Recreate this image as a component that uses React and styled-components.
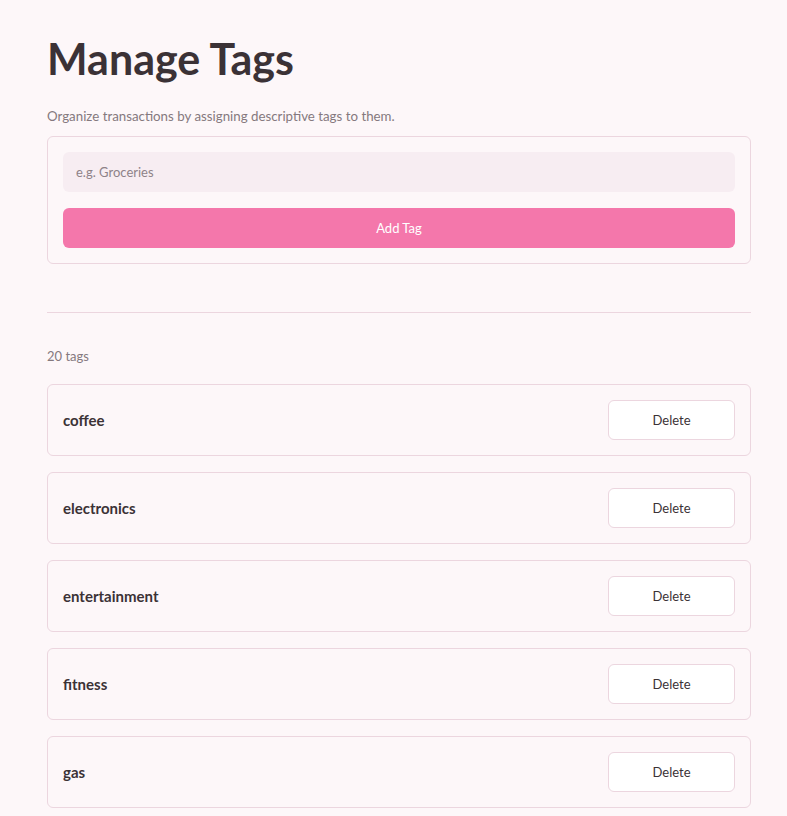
import React from 'react'
import styled, { createGlobalStyle } from 'styled-components'

const GlobalStyle = createGlobalStyle`
  body {
    margin: 0;
    background-color: #fdf7f9;
    font-family: Lato, "Open Sans", sans-serif;
    color: #3b3236;
  }
`

const Page = styled.main`
  padding: 33px 36px 40px 47px;
`

const Title = styled.h1`
  font-size: 43px;
  font-weight: 700;
  margin: 0;
  line-height: 52px;
  color: #3b3236;
`

const Subtitle = styled.p`
  font-size: 13.3px;
  color: #85797e;
  margin: 23px 0 12px 0;
`

const Card = styled.section`
  border: 1px solid #ecd6df;
  border-radius: 6px;
  padding: 15px;
  display: flex;
  flex-direction: column;
  gap: 16px;
`

const Input = styled.input`
  height: 40px;
  box-sizing: border-box;
  border: none;
  border-radius: 6px;
  background-color: #f7edf2;
  padding: 0 13px;
  font-family: inherit;
  font-size: 13px;
  color: #3b3236;
  outline: none;
  &::placeholder {
    color: #8e8288;
  }
`

const PrimaryButton = styled.button`
  height: 40px;
  border: none;
  border-radius: 6px;
  background-color: #f477ab;
  color: #fff;
  font-family: inherit;
  font-size: 13px;
`

const Divider = styled.hr`
  border: none;
  border-top: 1px solid #ecd6df;
  margin: 48px 0 0 0;
`

const Count = styled.div`
  font-size: 13px;
  color: #85797e;
  margin: 35px 0 20px 0;
`

const List = styled.div`
  display: flex;
  flex-direction: column;
  gap: 16px;
`

const Row = styled.div`
  display: flex;
  align-items: center;
  justify-content: space-between;
  border: 1px solid #ecd6df;
  border-radius: 6px;
  padding: 15px;
`

const TagName = styled.span`
  font-size: 15px;
  font-weight: 700;
  color: #3b3236;
`

const DeleteButton = styled.button`
  width: 127px;
  height: 40px;
  background-color: #fff;
  border: 1px solid #ecd6df;
  border-radius: 6px;
  font-family: inherit;
  font-size: 13px;
  color: #3b3236;
`

const tags = [
  'coffee', 'electronics', 'entertainment', 'fitness', 'gas',
  'gifts', 'groceries', 'health', 'home', 'insurance',
  'internet', 'pets', 'phone', 'rent', 'restaurants',
  'shopping', 'subscriptions', 'transport', 'travel', 'utilities',
]

const App = () => {
  return (
    <>
      <GlobalStyle />
      <Page>
        <Title>Manage Tags</Title>
        <Subtitle>Organize transactions by assigning descriptive tags to them.</Subtitle>
        <Card>
          <Input placeholder='e.g. Groceries' />
          <PrimaryButton>Add Tag</PrimaryButton>
        </Card>
        <Divider />
        <Count>{tags.length} tags</Count>
        <List>
          {tags.map((tag) => (
            <Row key={tag}>
              <TagName>{tag}</TagName>
              <DeleteButton>Delete</DeleteButton>
            </Row>
          ))}
        </List>
      </Page>
    </>
  )
}

export default App
